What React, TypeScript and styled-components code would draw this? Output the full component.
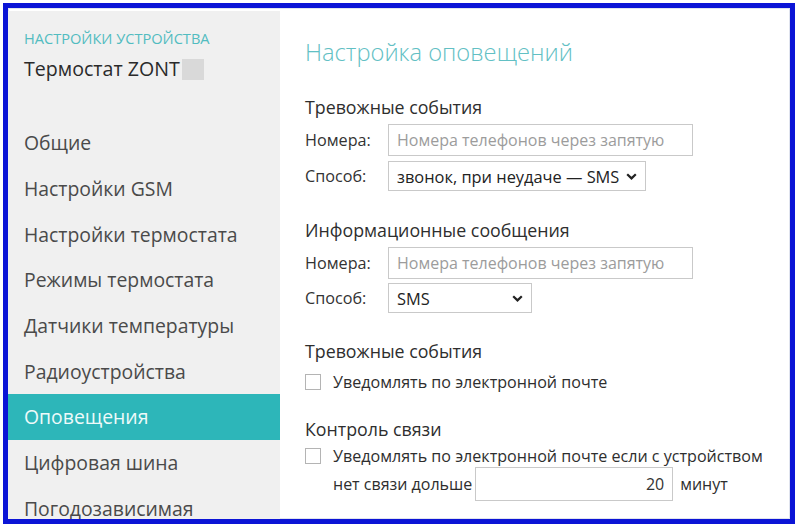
import React from "react";
import styled, { createGlobalStyle } from "styled-components";

const GlobalStyle = createGlobalStyle`
    html, body {
        margin: 0;
        padding: 0;
        background: #ffffff;
    }
    body {
        font-family: "Open Sans", "Noto Sans", sans-serif;
        color: #333333;
    }
`;

const menuItems = [
    "Общие",
    "Настройки GSM",
    "Настройки термостата",
    "Режимы термостата",
    "Датчики температуры",
    "Радиоустройства",
    "Оповещения",
    "Цифровая шина",
    "Погодозависимая",
];

const Chevron = () => (
    <svg width="11" height="7" viewBox="0 0 11 7">
        <path d="M1.2 1.2 L5.5 5.4 L9.8 1.2" fill="none" stroke="#222" strokeWidth="2.2" />
    </svg>
);

const App = () => {
    return (
        <Page>
            <GlobalStyle />
            <Frame>
                <Layout>
                    <Sidebar>
                        <DeviceCaption>Настройки устройства</DeviceCaption>
                        <DeviceName>
                            Термостат ZONT<Redacted />
                        </DeviceName>
                        <Menu>
                            {menuItems.map((item) => (
                                <MenuItem key={item} $active={item === "Оповещения"}>
                                    {item}
                                </MenuItem>
                            ))}
                        </Menu>
                    </Sidebar>
                    <Content>
                        <Title>Настройка оповещений</Title>

                        <SectionTitle $top={28}>Тревожные события</SectionTitle>
                        <FieldRow $top={6}>
                            <Label>Номера:</Label>
                            <TextInput placeholder="Номера телефонов через запятую" />
                        </FieldRow>
                        <FieldRow $top={5}>
                            <Label>Способ:</Label>
                            <SelectBox $width={258}>
                                <span>звонок, при неудаче — SMS</span>
                                <Chevron />
                            </SelectBox>
                        </FieldRow>

                        <SectionTitle $top={28}>Информационные сообщения</SectionTitle>
                        <FieldRow $top={6}>
                            <Label>Номера:</Label>
                            <TextInput placeholder="Номера телефонов через запятую" />
                        </FieldRow>
                        <FieldRow $top={4}>
                            <Label>Способ:</Label>
                            <SelectBox $width={144}>
                                <span>SMS</span>
                                <Chevron />
                            </SelectBox>
                        </FieldRow>

                        <SectionTitle $top={27}>Тревожные события</SectionTitle>
                        <CheckRow $top={9}>
                            <CheckBox />
                            <span>Уведомлять по электронной почте</span>
                        </CheckRow>

                        <SectionTitle $top={25}>Контроль связи</SectionTitle>
                        <CheckRow $top={5}>
                            <CheckBox />
                            <span>Уведомлять по электронной почте если с устройством</span>
                        </CheckRow>
                        <TimeoutRow>
                            <span>нет связи дольше</span>
                            <NumberInput defaultValue="20" />
                            <span>минут</span>
                        </TimeoutRow>
                    </Content>
                </Layout>
            </Frame>
        </Page>
    );
};

const Page = styled.div`
    width: 800px;
    height: 529px;
    padding: 3px 5px 5px 3px;
    box-sizing: border-box;
    overflow: hidden;
`;

const Frame = styled.div`
    width: 100%;
    height: 100%;
    box-sizing: border-box;
    border: 5px solid #0b14d6;
    background: #ffffff;
    padding-top: 3px;
    box-shadow: inset 0 0 0 1px #dfe3ee;
    overflow: hidden;
`;

const Layout = styled.div`
    display: grid;
    grid-template-columns: 272px 1fr;
    height: 100%;
`;

const Sidebar = styled.nav`
    background: #f0f0f0;
    padding-top: 17px;
    overflow: hidden;
`;

const DeviceCaption = styled.div`
    padding-left: 16px;
    font-size: 14.6px;
    line-height: 20px;
    text-transform: uppercase;
    color: #52bcc0;
`;

const DeviceName = styled.div`
    display: flex;
    align-items: center;
    padding-left: 16px;
    margin-top: 10px;
    font-size: 19.6px;
    line-height: 22px;
    color: #2a2a2a;
`;

const Redacted = styled.span`
    display: inline-block;
    width: 22px;
    height: 21px;
    margin-left: 2px;
    background: #d9d9d9;
`;

const Menu = styled.ul`
    list-style: none;
    margin: 40px 0 0;
    padding: 0;
`;

const MenuItem = styled.li<{ $active?: boolean }>`
    height: 45.7px;
    display: flex;
    align-items: center;
    padding-left: 16px;
    font-size: 19.4px;
    color: ${({ $active }) => ($active ? "#eefafa" : "#4a4a4a")};
    background: ${({ $active }) => ($active ? "#2db6b9" : "transparent")};
`;

const Content = styled.main`
    padding: 25px 0 0 25px;
    overflow: hidden;
`;

const Title = styled.h1`
    margin: 0;
    font-size: 23.7px;
    font-weight: 300;
    line-height: 32px;
    color: #62c0c4;
`;

const SectionTitle = styled.h3<{ $top: number }>`
    margin: ${({ $top }) => $top}px 0 0;
    font-size: 17.8px;
    font-weight: 400;
    line-height: 22px;
    color: #2e2e2e;
`;

const FieldRow = styled.div<{ $top: number }>`
    display: flex;
    align-items: center;
    margin-top: ${({ $top }) => $top}px;
`;

const Label = styled.span`
    width: 83px;
    font-size: 16.2px;
    color: #333333;
`;

const TextInput = styled.input`
    width: 305px;
    height: 32px;
    box-sizing: border-box;
    border: 1px solid #c9c9c9;
    padding: 0 8px;
    font-family: inherit;
    font-size: 16px;
    color: #333333;
    outline: none;

    &::placeholder {
        color: #9c9c9c;
    }
`;

const SelectBox = styled.div<{ $width: number }>`
    width: ${({ $width }) => $width}px;
    height: 30px;
    box-sizing: border-box;
    border: 1px solid #c9c9c9;
    padding: 0 8px 0 8px;
    display: flex;
    align-items: center;
    justify-content: space-between;
    font-size: 16.4px;
    color: #222222;
    background: #ffffff;
`;

const CheckRow = styled.label<{ $top: number }>`
    display: flex;
    align-items: center;
    gap: 12px;
    margin-top: ${({ $top }) => $top}px;
    font-size: 16.1px;
    line-height: 22px;
    color: #2e2e2e;
`;

const CheckBox = styled.span`
    width: 16px;
    height: 16px;
    box-sizing: border-box;
    border: 1px solid #b4b4b4;
    background: #ffffff;
    flex-shrink: 0;
`;

const TimeoutRow = styled.div`
    display: flex;
    align-items: center;
    padding-left: 28px;
    margin-top: 0;
    font-size: 16px;
    color: #2e2e2e;
`;

const NumberInput = styled.input`
    width: 198px;
    height: 34px;
    margin: 0 7px 0 3px;
    box-sizing: border-box;
    border: 1px solid #c9c9c9;
    padding: 0 8px;
    text-align: right;
    font-family: inherit;
    font-size: 16px;
    color: #333333;
    outline: none;
`;

export default App;
